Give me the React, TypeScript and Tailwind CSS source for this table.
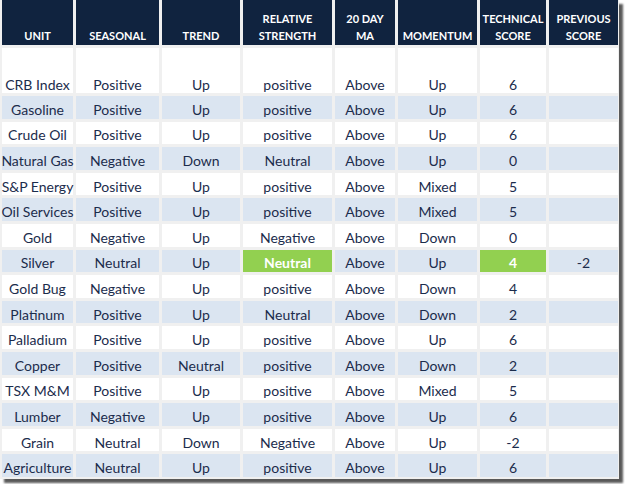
const cols = 'grid grid-cols-[71px_83px_78px_89px_60px_79px_66px_69px] gap-x-[3px]';

type Row = {
  unit: string;
  seasonal: string;
  trend: string;
  rs: string;
  ma: string;
  momentum: string;
  score: string;
  prev?: string;
  highlight?: boolean;
};

const rows: Row[] = [
  { unit: 'CRB Index', seasonal: 'Positive', trend: 'Up', rs: 'positive', ma: 'Above', momentum: 'Up', score: '6' },
  { unit: 'Gasoline', seasonal: 'Positive', trend: 'Up', rs: 'positive', ma: 'Above', momentum: 'Up', score: '6' },
  { unit: 'Crude Oil', seasonal: 'Positive', trend: 'Up', rs: 'positive', ma: 'Above', momentum: 'Up', score: '6' },
  { unit: 'Natural Gas', seasonal: 'Negative', trend: 'Down', rs: 'Neutral', ma: 'Above', momentum: 'Up', score: '0' },
  { unit: 'S&P Energy', seasonal: 'Positive', trend: 'Up', rs: 'positive', ma: 'Above', momentum: 'Mixed', score: '5' },
  { unit: 'Oil Services', seasonal: 'Positive', trend: 'Up', rs: 'positive', ma: 'Above', momentum: 'Mixed', score: '5' },
  { unit: 'Gold', seasonal: 'Negative', trend: 'Up', rs: 'Negative', ma: 'Above', momentum: 'Down', score: '0' },
  { unit: 'Silver', seasonal: 'Neutral', trend: 'Up', rs: 'Neutral', ma: 'Above', momentum: 'Up', score: '4', prev: '-2', highlight: true },
  { unit: 'Gold Bug', seasonal: 'Negative', trend: 'Up', rs: 'positive', ma: 'Above', momentum: 'Down', score: '4' },
  { unit: 'Platinum', seasonal: 'Positive', trend: 'Up', rs: 'Neutral', ma: 'Above', momentum: 'Down', score: '2' },
  { unit: 'Palladium', seasonal: 'Positive', trend: 'Up', rs: 'positive', ma: 'Above', momentum: 'Up', score: '6' },
  { unit: 'Copper', seasonal: 'Positive', trend: 'Neutral', rs: 'positive', ma: 'Above', momentum: 'Down', score: '2' },
  { unit: 'TSX M&M', seasonal: 'Positive', trend: 'Up', rs: 'positive', ma: 'Above', momentum: 'Mixed', score: '5' },
  { unit: 'Lumber', seasonal: 'Negative', trend: 'Up', rs: 'positive', ma: 'Above', momentum: 'Up', score: '6' },
  { unit: 'Grain', seasonal: 'Neutral', trend: 'Down', rs: 'Negative', ma: 'Above', momentum: 'Up', score: '-2' },
  { unit: 'Agriculture', seasonal: 'Neutral', trend: 'Up', rs: 'positive', ma: 'Above', momentum: 'Up', score: '6' },
];

const headers = [
  ['UNIT'],
  ['SEASONAL'],
  ['TREND'],
  ['RELATIVE', 'STRENGTH'],
  ['20 DAY', 'MA'],
  ['MOMENTUM'],
  ['TECHNICAL', 'SCORE'],
  ['PREVIOUS', 'SCORE'],
];

function Cell({ children, bg, green, first }: { children?: React.ReactNode; bg: string; green?: boolean; first?: boolean }) {
  return (
    <div
      className={`flex justify-center whitespace-nowrap ${first ? 'items-end pb-[1px]' : 'items-center pt-[5px]'} ${
        green ? 'bg-[#92d050] font-bold text-white' : `${bg} text-[#1b2c4c]`
      }`}
    >
      {children}
    </div>
  );
}

export default function App() {
  return (
    <div className="bg-white w-[625px] h-[484px]">
      <div
        className="flex w-[619px] h-[479px] flex-col gap-y-[3px] bg-[#f0f0f0] pl-[2px] shadow-[4px_4px_2px_rgba(0,0,0,0.65)]"
        style={{ fontFamily: 'Lato, "Open Sans", sans-serif' }}
      >
        <div className={`${cols} h-[45px]`}>
          {headers.map((h) => (
            <div
              key={h.join()}
              className="flex flex-col items-center justify-end bg-[#10233f] pb-[1px] text-[11px] font-bold leading-[17px] text-white"
            >
              {h.map((line) => (
                <span key={line}>{line}</span>
              ))}
            </div>
          ))}
        </div>
        {rows.map((r, i) => {
          const bg = i % 2 === 0 ? 'bg-white' : 'bg-[#dbe5f1]';
          const first = i === 0;
          return (
            <div key={r.unit} className={`${cols} text-[14px] leading-none ${first ? 'h-[45px]' : 'h-[22.6px]'}`}>
              <Cell bg={bg} first={first}>{r.unit}</Cell>
              <Cell bg={bg} first={first}>{r.seasonal}</Cell>
              <Cell bg={bg} first={first}>{r.trend}</Cell>
              <Cell bg={bg} first={first} green={r.highlight}>{r.rs}</Cell>
              <Cell bg={bg} first={first}>{r.ma}</Cell>
              <Cell bg={bg} first={first}>{r.momentum}</Cell>
              <Cell bg={bg} first={first} green={r.highlight}>{r.score}</Cell>
              <Cell bg={bg} first={first}>{r.prev}</Cell>
            </div>
          );
        })}
      </div>
    </div>
  );
}
